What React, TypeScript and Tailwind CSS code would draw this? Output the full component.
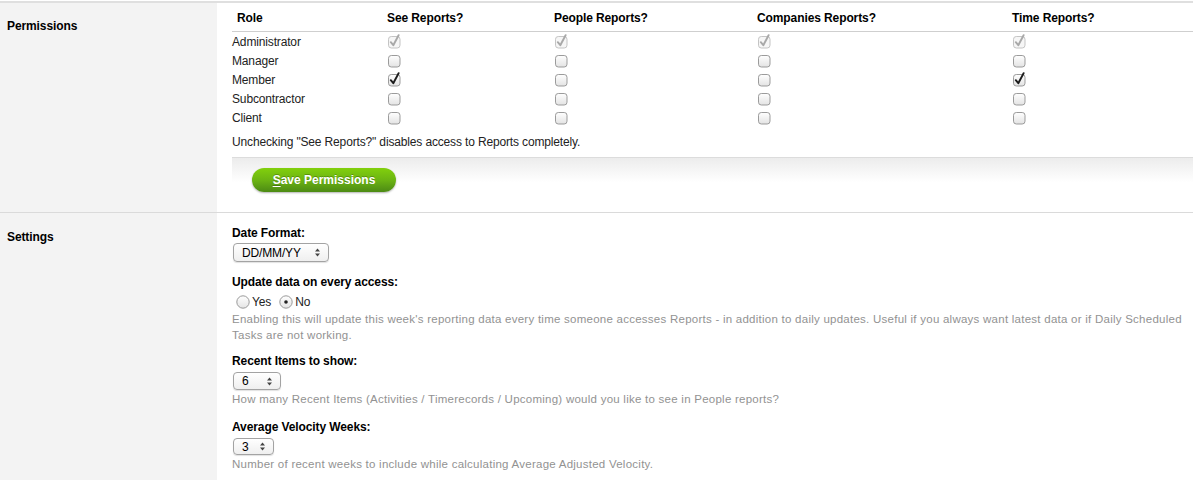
import React from "react";

type Box = { checked?: boolean; disabled?: boolean };

const Checkbox = ({ checked, disabled }: Box) => {
  const stroke = disabled ? "#c4c4c4" : "#9b9b9b";
  const tick = disabled ? "#a8a8a8" : "#1c1c1c";
  return (
    <svg width="15" height="15" viewBox="0 0 15 15" className="ml-px">
      <defs>
        <linearGradient id="cbg" x1="0" y1="0" x2="0" y2="1">
          <stop offset="0" stopColor="#ffffff" />
          <stop offset="1" stopColor="#e3e3e3" />
        </linearGradient>
      </defs>
      <rect x="0.5" y="2.5" width="11.5" height="11.5" rx="2.8" fill={disabled ? "#f6f6f6" : "url(#cbg)"} stroke={stroke} />
      {checked && (
        <path d="M2.8 8.2 L5.3 11.2 L10.6 1.2" fill="none" stroke={tick} strokeWidth="1.9" strokeLinecap="round" strokeLinejoin="round" />
      )}
    </svg>
  );
};

const Radio = ({ on }: { on?: boolean }) => (
  <svg width="14" height="14" viewBox="0 0 14 14">
    <defs>
      <linearGradient id="rbg" x1="0" y1="0" x2="0" y2="1">
        <stop offset="0" stopColor="#ffffff" />
        <stop offset="1" stopColor="#e4e4e4" />
      </linearGradient>
    </defs>
    <circle cx="7" cy="7" r="6.2" fill="url(#rbg)" stroke="#9a9a9a" />
    {on && <circle cx="7" cy="7" r="1.8" fill="#222" />}
  </svg>
);

const Select = ({ value, width, height }: { value: string; width: string; height: string }) => (
  <div
    className={`${width} ${height} ml-px flex items-center justify-between pl-[8px] pr-[7px] rounded-[4px] border border-[#a3a3a3] bg-linear-to-b from-white to-[#efefef] shadow-[0_1px_1px_rgba(0,0,0,0.12)] text-[12px] text-black`}
  >
    <span>{value}</span>
    <svg width="7" height="9" viewBox="0 0 7 9">
      <path d="M3.5 0.5 L6 3.5 H1 Z" fill="#444" />
      <path d="M3.5 8.5 L6 5.5 H1 Z" fill="#444" />
    </svg>
  </div>
);

const rows: { role: string; cells: Box[] }[] = [
  { role: "Administrator", cells: [{ checked: true, disabled: true }, { checked: true, disabled: true }, { checked: true, disabled: true }, { checked: true, disabled: true }] },
  { role: "Manager", cells: [{}, {}, {}, {}] },
  { role: "Member", cells: [{ checked: true }, {}, {}, { checked: true }] },
  { role: "Subcontractor", cells: [{}, {}, {}, {}] },
  { role: "Client", cells: [{}, {}, {}, {}] },
];

const cols = "grid grid-cols-[155px_167px_203px_255px_1fr]";
const label = "font-bold text-black tracking-[-0.1px]";
const hint = "mt-px text-[11.5px] tracking-[0.25px] text-[#929292]";

const App = () => {
  return (
    <div className="w-[1193px] h-[480px] overflow-hidden bg-white font-['Liberation_Sans',Arial,sans-serif] text-[12px] text-[#222] tracking-[-0.15px]">
      <div className="h-px bg-white" />
      <div className="h-[2px] bg-[#dfdfdf]" />

      <section className="flex">
        <div className={`w-[217px] shrink-0 bg-[#f3f3f3] pl-[7px] pt-[15px] leading-[16px] ${label}`}>
          Permissions
        </div>
        <div className="flex-1 pl-[15px]">
          <div className={`${cols} h-[29px] pt-px items-center border-b border-[#cfcfcf] ${label}`}>
            <div className="pl-[5px]">Role</div>
            <div>See Reports?</div>
            <div>People Reports?</div>
            <div>Companies Reports?</div>
            <div>Time Reports?</div>
          </div>
          {rows.map((r) => (
            <div key={r.role} className={`${cols} h-[19px] items-center`}>
              <div>{r.role}</div>
              {r.cells.map((c, i) => (
                <div key={i} className="flex items-center">
                  <Checkbox checked={c.checked} disabled={c.disabled} />
                </div>
              ))}
            </div>
          ))}
          <div className="mt-[7px] mb-[7px] leading-[16px]">
            Unchecking "See Reports?" disables access to Reports completely.
          </div>
          <div className="border-t border-[#dcdcdc] bg-linear-to-b from-[#ececec] to-white to-[45%] pt-[10px] pb-[20px]">
            <button className="ml-[20px] w-[144px] h-[24px] rounded-full bg-linear-to-b from-[#82d00c] via-[#6cb412] to-[#4c8a14] shadow-[0_1px_2px_rgba(0,0,0,0.3)] text-white font-bold text-[12px] tracking-normal [text-shadow:0_-1px_0_rgba(0,0,0,0.25)]">
              <span className="underline underline-offset-2">S</span>ave Permissions
            </button>
          </div>
        </div>
      </section>

      <div className="h-px bg-[#dadada]" />

      <section className="flex h-[300px]">
        <div className={`w-[217px] shrink-0 bg-[#f3f3f3] pl-[7px] pt-[16px] leading-[16px] ${label}`}>
          Settings
        </div>
        <div className="flex-1 pl-[15px] pt-[12px] leading-[16px]">
          <div className={label}>Date Format:</div>
          <div className="mt-[2px]">
            <Select value="DD/MM/YY" width="w-[96px]" height="h-[19px]" />
          </div>

          <div className={`mt-[12px] ${label}`}>Update data on every access:</div>
          <div className="mt-[4px] h-[16px] pl-[4px] flex items-center">
            <Radio />
            <span className="ml-[2px]">Yes</span>
            <span className="ml-[8px]"><Radio on /></span>
            <span className="ml-[2px]">No</span>
          </div>
          <div className={`${hint} pr-[8px]`}>
            Enabling this will update this week's reporting data every time someone accesses Reports - in addition to daily updates. Useful if you always want latest data or if Daily Scheduled Tasks are not working.
          </div>

          <div className={`mt-[10px] ${label}`}>Recent Items to show:</div>
          <div className="mt-[3px]">
            <Select value="6" width="w-[48px]" height="h-[18px]" />
          </div>
          <div className={hint}>
            How many Recent Items (Activities / Timerecords / Upcoming) would you like to see in People reports?
          </div>

          <div className={`mt-[12px] ${label}`}>Average Velocity Weeks:</div>
          <div className="mt-[3px]">
            <Select value="3" width="w-[41px]" height="h-[17px]" />
          </div>
          <div className={hint}>
            Number of recent weeks to include while calculating Average Adjusted Velocity.
          </div>
        </div>
      </section>
    </div>
  );
};

export default App;
